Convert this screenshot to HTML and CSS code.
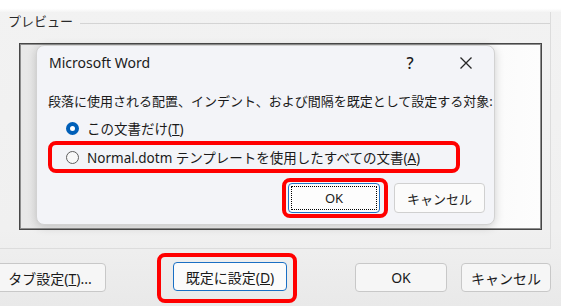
FILE: index.html
```html
<!DOCTYPE html>
<html lang="ja">
<head>
  <meta charset="UTF-8">
  <title>段落の既定設定</title>
  <link rel="stylesheet" href="styles.css">
</head>
<body>

  <div class="strip"></div>

  <!-- Preview group -->
  <div class="group">
    <div class="legend">
      <span class="legend-text">プレビュー</span>
      <span class="legend-line"></span>
    </div>

    <div class="frame">
      <!-- Microsoft Word confirm dialog -->
      <div class="dialog">
        <div class="titlebar">
          <span class="title">Microsoft Word</span>
          <span class="tbtn help">?</span>
          <span class="tbtn close">
            <svg width="14" height="14" viewBox="0 0 14 14">
              <path d="M1.5 1.5 L12.5 12.5 M12.5 1.5 L1.5 12.5" stroke="#262626" stroke-width="1.3" fill="none"/>
            </svg>
          </span>
        </div>

        <div class="dlg-body">
          <p class="prompt">段落に使用される配置、インデント、および間隔を既定として設定する対象:</p>

          <label class="option first">
            <span class="radio checked"></span>
            <span>この文書だけ(<u>T</u>)</span>
          </label>

          <div class="mark mark-option">
            <label class="option">
              <span class="radio"></span>
              <span>Normal.dotm テンプレートを使用したすべての文書(<u>A</u>)</span>
            </label>
          </div>

          <div class="dlg-actions">
            <div class="mark mark-ok">
              <button class="btn btn-focus">OK</button>
            </div>
            <button class="btn btn-cancel">キャンセル</button>
          </div>
        </div>
      </div>
    </div>
  </div>

  <!-- Bottom buttons -->
  <div class="actions">
    <button class="pbtn tabs">タブ設定(<u>T</u>)...</button>
    <div class="mark mark-default">
      <button class="pbtn default">既定に設定(<u>D</u>)</button>
    </div>
    <button class="pbtn ok">OK</button>
    <button class="pbtn cancel">キャンセル</button>
  </div>

</body>
</html>
```

FILE: styles.css
```css
body {
  margin: 0;
  width: 561px;
  height: 306px;
  overflow: hidden;
  background: linear-gradient(180deg, #f2f2f2 0%, #f0f0f0 75%, #e9e9e9 100%);
  font-family: "Noto Sans", "Noto Sans CJK JP", sans-serif;
  font-size: 13px;
  color: #1a1a1a;
}

.strip {
  height: 12px;
  background: linear-gradient(180deg, #ffffff 70%, #f4f4f4);
}

/* preview group box */
.group {
  margin-right: 10px;
  padding-bottom: 18px;
  border-right: 1px solid #dcdcdc;
  border-bottom: 1px solid #dcdcdc;
}

.legend {
  display: flex;
  height: 18px;
  padding-left: 8px;
}

.legend-text {
  line-height: 18px;
  color: #2a2a2a;
}

.legend-line {
  flex: 1;
  height: 1px;
  margin: 11px 0 0 7px;
  background: #d4d4d4;
}

.frame {
  box-sizing: border-box;
  width: 523px;
  height: 187px;
  margin: 13px 0 0 19px;
  padding: 1px 0 0 16px;
  border: 1px solid #474747;
  box-shadow: inset 0 0 0 1px #8e8e8e;
  background: linear-gradient(90deg, #e8e8e8, #f2f2f2 55%, #fdfdfd);
}

.dialog {
  box-sizing: border-box;
  width: 459px;
  height: 180px;
  border: 1px solid #d2d2d2;
  border-radius: 8px;
  background: #f3f4f8;
  box-shadow: 0 2px 10px rgba(0,0,0,0.18);
}

.titlebar {
  display: flex;
  align-items: center;
  height: 33px;
}

.title {
  padding-left: 12px;
  font-size: 14px;
}

.tbtn {
  display: flex;
  justify-content: center;
  width: 20px;
}

.help {
  margin-left: auto;
  font-size: 16px;
  font-weight: 500;
}

.close {
  margin: 0 18px 0 36px;
}

.dlg-body {
  padding-left: 11px;
}

.prompt {
  margin: 12px 0 0;
  line-height: 20px;
}

.option {
  display: flex;
  align-items: center;
  gap: 8px;
  height: 24px;
  padding-left: 14px;
  font-size: 13.5px;
  white-space: nowrap;
}

.option.first {
  height: 20px;
  margin-top: 7px;
  padding-left: 18px;
}

.radio {
  box-sizing: border-box;
  width: 13px;
  height: 13px;
  border: 1px solid #5e5e5e;
  border-radius: 50%;
  background: #f8f8f8;
}

.radio.checked {
  border: 4px solid #005fb8;
  background: #fff;
}

/* red highlight boxes */
.mark {
  box-sizing: border-box;
  border: 4px solid #ff0000;
  border-radius: 8px;
}

.mark-option {
  width: 412px;
  height: 32px;
  margin-top: 3px;
}

.dlg-actions {
  display: flex;
  justify-content: flex-end;
  align-items: center;
  margin-top: 5px;
  padding-right: 9px;
}

.mark-ok {
  display: flex;
  align-items: center;
  width: 106px;
  height: 40px;
  padding: 0 4px 0 2px;
}

.btn {
  box-sizing: border-box;
  height: 30px;
  border: 1px solid #d0d0d0;
  border-radius: 4px;
  background: #fbfbfb;
  font: inherit;
  color: #1a1a1a;
}

.btn-focus {
  width: 92px;
  border-color: #1f73c7;
  background: #fdfdfd;
  outline: 1px dotted #000;
  outline-offset: -4px;
}

.btn-cancel {
  width: 91px;
  margin-left: 6px;
}

/* bottom row */
.actions {
  display: flex;
  align-items: center;
  height: 57px;
}

.pbtn {
  box-sizing: border-box;
  height: 29px;
  padding: 0;
  border: 1px solid #c8c8c8;
  border-radius: 4px;
  background: #f6f6f6;
  font: inherit;
  font-size: 14px;
  color: #1a1a1a;
}

.tabs {
  width: 112px;
  margin-left: -6px;
}

.mark-default {
  display: flex;
  align-items: center;
  width: 140px;
  height: 50px;
  margin-left: 51px;
  padding: 0 6px 2px 12px;
}

.default {
  width: 114px;
  border-color: #1a6fc4;
  background: #fbfbfb;
}

.ok {
  width: 92px;
  margin-left: 58px;
}

.cancel {
  width: 90px;
  margin-left: 14px;
}
```
